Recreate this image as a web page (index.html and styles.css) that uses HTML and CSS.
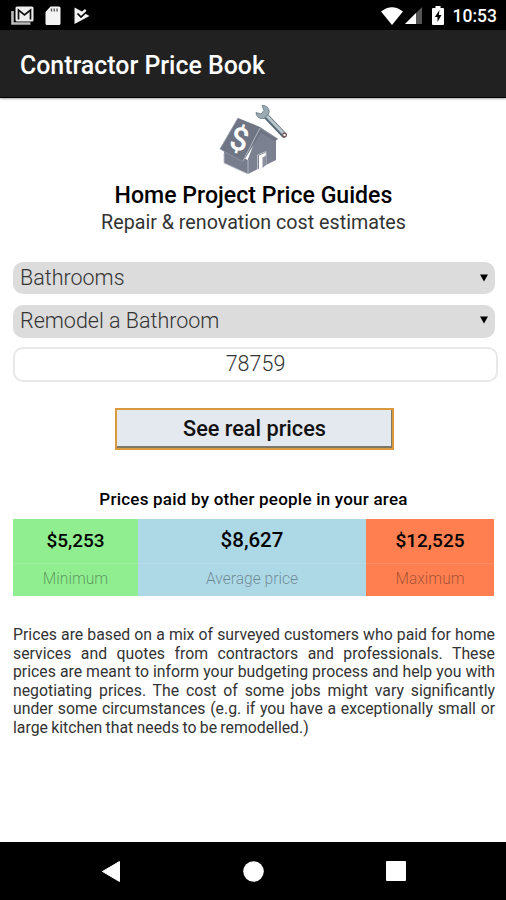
FILE: index.html
```html
<!DOCTYPE html>
<html lang="en">
  <head>
    <meta charset="UTF-8" />
    <meta name="viewport" content="width=device-width, initial-scale=1.0" />
    <title>Contractor Price Book</title>
    <link rel="stylesheet" href="styles.css">
  </head>
  <body>
    <div class="status-bar">
      <div class="status-left">
        <svg width="23" height="20" viewBox="0 0 23 20">
          <path d="M1.5 5v12.5h18" fill="none" stroke="#bbb" stroke-width="2.6" />
          <rect x="4.5" y="0.5" width="18" height="15" rx="1.5" fill="#eee" />
          <path d="M7.5 13.5V4l6 5 6-5v9.500" fill="none" stroke="#111" stroke-width="1.7" />
        </svg>
        <svg width="16" height="20" viewBox="0 0 16 20">
          <path d="M5.500 0.500H14a1.500 1.500 0 0 1 1.500 1.500v15.500a1.500 1.500 0 0 1-1.500 1.500H2a1.500 1.500 0 0 1-1.500-1.500V6z" fill="#f4f4f4" />
          <path d="M6.500 2.500v3M9.300 2.500v3M12.100 2.500v3" stroke="#555" stroke-width="1.400" />
        </svg>
        <svg width="16" height="20" viewBox="0 0 16 20">
          <path d="M0.500 1.500L8 5.500l3-2.500 1.500 2L11 7.500l4.500 2.500L0.500 18z" fill="#f4f4f4" />
          <path d="M3.500 7.500l3.500 3.500L13.500 5" fill="none" stroke="#000" stroke-width="1.700" />
        </svg>
      </div>
      <div class="status-right">
        <svg width="22" height="18" viewBox="0 0 22 18">
          <path d="M0 4.500Q11-4 22 4.500L11 18z" fill="#fff" />
        </svg>
        <svg class="signal" width="17" height="17" viewBox="0 0 17 17">
          <path d="M17 0v17H0z" fill="#555" />
          <path d="M11 6v11H0z" fill="#fff" />
        </svg>
        <svg class="battery" width="12" height="19" viewBox="0 0 12 19">
          <path d="M3.500 0h5v2H11a1 1 0 0 1 1 1v15a1 1 0 0 1-1 1H1a1 1 0 0 1-1-1V3a1 1 0 0 1 1-1h2.500z" fill="#fff" />
          <path d="M7.500 4L2.800 11h2.700v5L9.500 9H6.800z" fill="#000" />
        </svg>
        <span class="clock">10:53</span>
      </div>
    </div>

    <header class="app-bar">Contractor Price Book</header>

    <main class="content">
      <svg class="logo" width="70" height="71" viewBox="0 0 70 71">
        <path d="M5 46v13l24 11V56z" fill="#777d8c" />
        <path d="M41 24L57 35v21L29 70V55z" fill="#7b8190" />
        <path d="M19 14L41 23 59 35l-3 2-14-8-18 29L1 45z" fill="#6f7584" />
        <path d="M40 65V51.500l7-3V61l-4 4z" fill="#fff" />
        <path d="M38.500 65.500V51l8.500-3.500v13" fill="none" stroke="#c9ccd3" stroke-width="0.800" />
        <path d="M43.500 64V53.500l3.500-2V61z" fill="#8a909c" />
        <path d="M41 24L24 57M5 49v10l24 11V56" fill="none" stroke="#b9bdc8" stroke-width="0.900" />
        <path d="M19 14L1 45l23 13M41 24l18 11" fill="none" stroke="#9297a5" stroke-width="0.800" />
        <text class="logo-sign" x="20.500" y="46" transform="rotate(15 20 35)">$</text>
        <path d="M46 11L65 31" stroke="#596b79" stroke-width="5.500" stroke-linecap="round" />
        <path d="M46 10L65 30" stroke="#b8c5cb" stroke-width="3" stroke-linecap="round" />
        <path d="M43 1.500l2 5-3 3.500-5-1.500c0 4 4 7.500 9 5.500l4-5c1-5-3-8-7-7.500z" fill="#9baab3" stroke="#607581" stroke-width="0.800" />
        <circle cx="65.500" cy="31" r="1.800" fill="#fff" stroke="#76504e" stroke-width="1.200" />
      </svg>
      <h1>Home Project Price Guides</h1>
      <p class="subtitle">Repair &amp; renovation cost estimates</p>

      <form class="search">
        <div class="select-box">
          <select class="category">
            <option>Bathrooms</option>
          </select>
          <svg class="caret" width="8" height="8" viewBox="0 0 8 8"><path d="M0 0.500h8L4 7.500z" /></svg>
        </div>
        <div class="select-box project-box">
          <select class="project">
            <option>Remodel a Bathroom</option>
          </select>
          <svg class="caret" width="8" height="8" viewBox="0 0 8 8"><path d="M0 0.500h8L4 7.500z" /></svg>
        </div>
        <input class="zip" type="text" value="78759" />
        <button class="submit" type="button">See real prices</button>
      </form>

      <h2>Prices paid by other people in your area</h2>
      <div class="prices">
        <div class="price minimum">
          <strong>$5,253</strong>
          <span>Minimum</span>
        </div>
        <div class="price average">
          <strong>$8,627</strong>
          <span>Average price</span>
        </div>
        <div class="price maximum">
          <strong>$12,525</strong>
          <span>Maximum</span>
        </div>
      </div>

      <p class="note">
        Prices are based on a mix of surveyed customers who paid for home
        services and quotes from contractors and professionals. These
        prices are meant to inform your budgeting process and help you with
        negotiating prices. The cost of some jobs might vary significantly
        under some circumstances (e.g. if you have a exceptionally small or
        large kitchen that needs to be remodelled.)
      </p>
    </main>

    <nav class="nav-bar">
      <svg width="18" height="21" viewBox="0 0 18 21"><path d="M17.500 0.500v20L0.500 10.500z" fill="#fff" stroke="#fff" stroke-linejoin="round" /></svg>
      <svg width="21" height="21" viewBox="0 0 21 21"><circle cx="10.500" cy="10.500" r="10.300" fill="#fff" /></svg>
      <svg width="20" height="20" viewBox="0 0 20 20"><rect width="20" height="20" rx="1" fill="#fff" /></svg>
    </nav>
  </body>
</html>
```

FILE: styles.css
```css
* {
  box-sizing: border-box;
}

body {
  font-family: Roboto, sans-serif;
  margin: 0;
  height: 900px;
  display: flex;
  flex-direction: column;
  background-color: #fff;
  color: #000;
  overflow: hidden;
}

svg {
  display: block;
  flex: none;
}

.status-bar {
  height: 30px;
  padding: 1px 9px 0 11px;
  display: flex;
  justify-content: space-between;
  align-items: center;
  background-color: #000;
  color: #fff;
}

.status-left,
.status-right {
  display: flex;
  align-items: center;
}

.status-left {
  gap: 11px;
}

.status-left svg:last-child {
  margin-left: 2px;
}

.signal {
  margin-left: 2px;
}

.battery {
  margin: 0 9px 0 10px;
}

.clock {
  font-size: 17.5px;
  font-weight: 500;
  line-height: 20px;
}

.app-bar {
  height: 68px;
  padding-left: 20px;
  background-color: #212121;
  border-bottom: 1px solid #000;
  box-shadow: 0 1px 2px rgba(0, 0, 0, 0.35);
  color: #fff;
  font-size: 24.9px;
  font-weight: 500;
  line-height: 72px;
}

.content {
  flex: 1;
  padding: 6px 12px 0 13px;
}

.logo {
  margin: 0 auto;
}

.logo-sign {
  font-size: 32px;
  font-weight: 500;
  fill: #fff;
  text-anchor: middle;
}

h1,
h2,
.subtitle {
  margin: 0;
  text-align: center;
}

h1 {
  margin-top: 7px;
  font-size: 23.1px;
  font-weight: 500;
  line-height: 28px;
}

.subtitle {
  font-size: 19.7px;
  font-weight: 400;
  line-height: 25px;
  color: #333;
}

.search {
  margin-top: 27px;
  display: flex;
  flex-direction: column;
}

.select-box {
  width: 482px;
  height: 32px;
  padding: 0 7px;
  display: flex;
  align-items: center;
  background-color: #dcdcdc;
  border-radius: 10px;
}

.select-box select {
  flex: 1;
  height: 30px;
  padding: 0 0 2px;
  border: none;
  appearance: none;
  background: none;
  font-family: inherit;
  font-size: 21.5px;
  font-weight: 300;
  color: #333;
}

.project-box {
  height: 33px;
  margin-top: 11px;
}

.project-box .caret {
  margin-bottom: 3px;
}

.zip {
  width: 485px;
  height: 35px;
  margin-top: 9px;
  padding: 0 0 2px;
  border: 2px solid #e8e8e8;
  border-radius: 10px;
  background-color: #fff;
  text-align: center;
  font-family: inherit;
  font-size: 21.5px;
  font-weight: 300;
  color: #333;
}

.submit {
  width: 279px;
  height: 42px;
  margin: 26px 0 0 102px;
  padding: 0 0 2px;
  border: 2px solid #d99a3c;
  background-color: #e4e8ef;
  box-shadow: inset -1px -2px 0 #7c7766;
  font-family: inherit;
  font-size: 21.7px;
  font-weight: 500;
  color: #111;
}

h2 {
  margin-top: 39px;
  font-size: 17px;
  font-weight: 500;
  line-height: 20px;
  letter-spacing: 0.22px;
}

.prices {
  width: 481px;
  height: 77px;
  margin-top: 10px;
  display: grid;
  grid-template-columns: 125px 228px 128px;
}

.price {
  display: grid;
  grid-template-rows: 44px 33px;
  text-align: center;
}

.price strong {
  font-size: 19px;
  font-weight: 500;
  line-height: 44px;
}

.price span {
  border-top: 1px solid rgba(255, 255, 255, 0.12);
  font-size: 15.6px;
  font-weight: 300;
  line-height: 30px;
  color: rgba(0, 0, 0, 0.38);
}

.minimum {
  background-color: #90ee90;
}

.average {
  background-color: #add8e6;
}

.average strong {
  font-size: 20.5px;
  line-height: 43px;
}

.maximum {
  background-color: #ff7f50;
}

.note {
  margin: 30px 0 0;
  width: 482px;
  text-align: justify;
  font-size: 15.8px;
  line-height: 18.5px;
  word-spacing: -0.6px;
  color: #333;
}

.nav-bar {
  height: 58px;
  padding: 0 100px 0 102px;
  display: flex;
  justify-content: space-between;
  align-items: center;
  background-color: #000;
}
```
